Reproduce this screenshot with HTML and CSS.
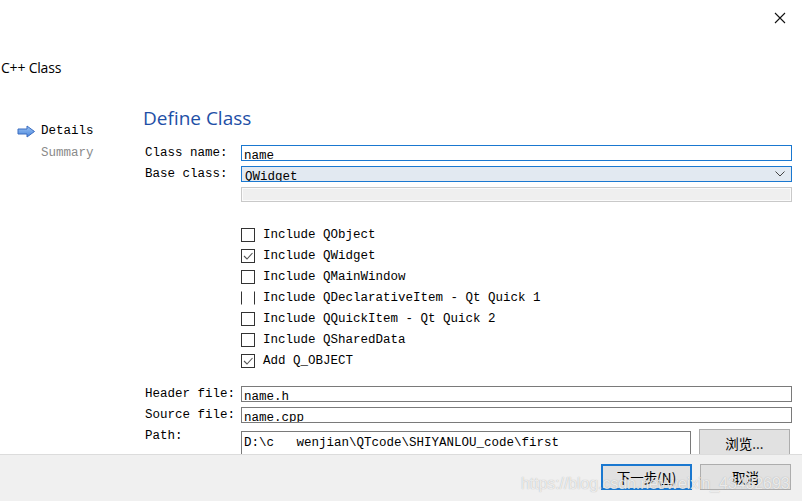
FILE: index.html
```html
<!DOCTYPE html>
<html>
<head>
<meta charset="utf-8">
<link rel="stylesheet" href="styles.css">
</head>
<body>
<div class="window">
  <div class="topbar">
    <svg class="close" width="12" height="12" viewBox="0 0 12 12"><path d="M1 1 L11 11 M11 1 L1 11" stroke="#111" stroke-width="1.1" fill="none"/></svg>
  </div>
  <div class="heading">C++ Class</div>
  <div class="main">
    <div class="sidebar">
      <div class="step current">
        <svg class="arrow" width="19" height="13" viewBox="0 0 19 13"><defs><linearGradient id="g" x1="0" y1="0" x2="0" y2="1"><stop offset="0" stop-color="#9cc4f4"/><stop offset="1" stop-color="#4a86dc"/></linearGradient></defs><path d="M1 4 H10 V1 L17.5 6.5 L10 12 V9 H1 Z" fill="url(#g)" stroke="#3a6cc0" stroke-width="1"/></svg>
        <span>Details</span>
      </div>
      <div class="step muted"><span>Summary</span></div>
    </div>
    <div class="content">
      <div class="title">Define Class</div>
      <div class="row">
        <div class="label">Class name:</div>
        <div class="field focus">name</div>
      </div>
      <div class="row">
        <div class="label">Base class:</div>
        <div class="field combo">QWidget<svg class="chev" width="10" height="6" viewBox="0 0 10 6"><path d="M0.5 0.5 L5 5 L9.5 0.5" stroke="#444" stroke-width="1" fill="none"/></svg></div>
      </div>
      <div class="row">
        <div class="label"></div>
        <div class="bar"></div>
      </div>
      <div class="checks">
        <div class="check"><span class="box"></span>Include QObject</div>
        <div class="check"><span class="box"><svg width="12" height="12" viewBox="0 0 12 12"><path d="M2 6 L5 9 L10.5 3" stroke="#555" stroke-width="1.1" fill="none"/></svg></span>Include QWidget</div>
        <div class="check"><span class="box"></span>Include QMainWindow</div>
        <div class="check"><span class="box broken"></span>Include QDeclarativeItem - Qt Quick 1</div>
        <div class="check"><span class="box"></span>Include QQuickItem - Qt Quick 2</div>
        <div class="check"><span class="box"></span>Include QSharedData</div>
        <div class="check"><span class="box"><svg width="12" height="12" viewBox="0 0 12 12"><path d="M2 6 L5 9 L10.5 3" stroke="#555" stroke-width="1.1" fill="none"/></svg></span>Add Q_OBJECT</div>
      </div>
      <div class="row first-file">
        <div class="label">Header file:</div>
        <div class="field plain">name.h</div>
      </div>
      <div class="row">
        <div class="label">Source file:</div>
        <div class="field plain">name.cpp</div>
      </div>
      <div class="row path-row">
        <div class="label">Path:</div>
        <div class="path-wrap">
          <div class="field plain path">D:\c&nbsp;&nbsp;&nbsp;wenjian\QTcode\SHIYANLOU_code\first</div>
          <div class="btn browse">浏览...</div>
        </div>
      </div>
    </div>
  </div>
  <div class="footer">
    <div class="btn default">下一步(<u>N</u>)</div>
    <div class="btn">取消</div>
    <div class="watermark">https://blog.csdn.net/weixin_43482693</div>
  </div>
</div>
</body>
</html>
```

FILE: styles.css
```css
* { box-sizing: border-box; }
html, body { margin: 0; padding: 0; }
body {
  width: 802px;
  height: 501px;
  overflow: hidden;
  background: #fff;
  font-family: "Liberation Mono", "DejaVu Sans Mono", monospace;
  font-size: 12.5px;
  color: #000;
}
.window {
  display: flex;
  flex-direction: column;
  height: 501px;
}
.topbar {
  height: 36px;
  display: flex;
  justify-content: flex-end;
  align-items: flex-start;
  padding-right: 16px;
}
.close { margin-top: 12px; }
.heading {
  font-family: "Open Sans", "Noto Sans", sans-serif;
  font-size: 14px;
  line-height: 20px;
  margin-top: 22px;
  padding-left: 1px;
  height: 42px;
  color: #000;
  letter-spacing: -0.2px;
}
.main {
  height: 354px;
  overflow: hidden;
  display: flex;
}
.sidebar {
  width: 144px;
  padding-top: 20px;
  padding-left: 17px;
}
.step {
  height: 22px;
  display: flex;
  align-items: center;
  padding-left: 24px;
  position: relative;
}
.step.current { padding-left: 0; }
.arrow { margin-right: 5px; }
.step.muted { color: #8a8a8a; }
.content {
  flex: 1;
  padding-top: 5px;
  padding-right: 10px;
}
.title {
  font-family: "Open Sans", "Noto Sans", sans-serif;
  font-size: 19px;
  line-height: 26px;
  color: #1e4fa6;
  margin-bottom: 14px;
  margin-left: -1px;
}
.row {
  display: flex;
  align-items: center;
  margin-bottom: 5px;
}
.label {
  width: 97px;
  padding-left: 1px;
  flex: none;
  line-height: 16px;
}
.field {
  flex: 1;
  height: 16px;
  line-height: 16px;
  padding: 2px 0 0 2px;
  overflow: hidden;
  white-space: nowrap;
  border: 1px solid #7a7a7a;
  background: #fff;
  position: relative;
}
.field.focus { border-color: #1a78d0; }
.field.combo {
  border-color: #1a78d0;
  background: #e2e9f1;
  padding-left: 3px;
}
.chev { position: absolute; right: 6px; top: 4px; }
.bar {
  flex: 1;
  height: 15px;
  border: 1px solid #c9c9c9;
  background: #efefef;
  box-shadow: inset 0 0 0 1px #fbfbfb;
}
.checks {
  margin-top: 22px;
  padding-left: 97px;
}
.check {
  height: 21px;
  display: flex;
  align-items: center;
}
.box {
  width: 14px;
  height: 14px;
  border: 1px solid #333;
  margin-right: 8px;
  display: flex;
  align-items: center;
  justify-content: center;
  flex: none;
}
.box.broken {
  border-top-color: transparent;
  border-bottom-color: transparent;
}
.first-file { margin-top: 15px; }
.path-row { align-items: flex-start; margin-top: 0; }
.path-wrap {
  flex: 1;
  display: flex;
  gap: 8px;
  padding-right: 2px;
}
.field.path {
  height: 26px;
  margin-top: 3px;
  padding-top: 3px;
  border-color: #7a7a7a;
}
.btn {
  width: 91px;
  height: 26px;
  background: #e1e1e1;
  border: 1px solid #adadad;
  display: flex;
  align-items: center;
  justify-content: center;
  font-family: "Noto Sans CJK SC", "Noto Sans", sans-serif;
  font-size: 13.5px;
  color: #000;
  flex: none;
}
.btn.browse {
  height: 28px;
  margin-top: 1px;
}
.footer {
  height: 47px;
  border-top: 1px solid #dcdcdc;
  background: #f0f0f0;
  display: flex;
  justify-content: flex-end;
  align-items: flex-start;
  gap: 8px;
  padding: 9px 11px 0 0;
  position: relative;
}
.btn.default { border: 2px solid #1a78d0; }
.watermark {
  position: absolute;
  left: 521px;
  top: 20px;
  font-family: "Liberation Sans", Arial, sans-serif;
  font-size: 16px;
  color: rgba(255,255,255,0.75);
  text-shadow: 0 0 1px rgba(120,120,120,0.6);
  white-space: nowrap;
  letter-spacing: -0.1px;
}
```
